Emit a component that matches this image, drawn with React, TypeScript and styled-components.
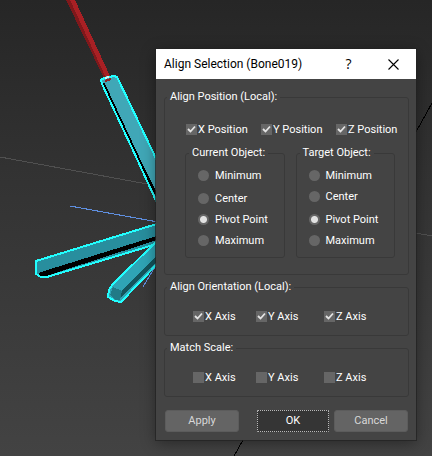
import React, { useState } from "react";
import styled, { createGlobalStyle } from "styled-components";

const GlobalStyle = createGlobalStyle`
  * { box-sizing: border-box; }
  body {
    margin: 0;
    background: #434343;
    font-family: Roboto, "Noto Sans", sans-serif;
    font-size: 11px;
    line-height: 14px;
  }
  button, input { font: inherit; }
`;

const Viewport = styled.main`
  position: relative;
  min-height: 100vh;
  padding: 49px 16px 16px;
  overflow: hidden;
  background: linear-gradient(#262626, #333333 40%, #434343);
`;

const Scene = styled.svg`
  position: absolute;
  top: 0;
  left: 0;
`;

const Dialog = styled.section`
  position: relative;
  width: 65%;
  min-width: 260px;
  max-width: 300px;
  margin-left: auto;
  background: #444444;
  color: #ffffff;
  box-shadow: 0 0 0 1px rgba(35, 35, 35, 0.75), 0 3px 14px rgba(0, 0, 0, 0.4);
`;

const TitleBar = styled.header`
  display: flex;
  align-items: center;
  height: 30px;
  padding-left: 8px;
  background: #ffffff;
  color: #000000;
`;

const Title = styled.h1`
  flex: 1;
  margin: 0;
  font-size: 12px;
  font-weight: 400;
  line-height: 16px;
  white-space: nowrap;
`;

const TitleButton = styled.button`
  display: flex;
  align-items: center;
  justify-content: center;
  width: 45px;
  height: 30px;
  padding: 0;
  border: 0;
  background: transparent;
  color: #000000;
  font-family: "Open Sans", sans-serif;
  font-size: 14px;
`;

const Body = styled.form`
  display: flex;
  flex-direction: column;
  gap: 5px;
  padding: 11px 7px 8px 8px;
`;

const Group = styled.fieldset<{ $inner?: boolean }>`
  min-width: 0;
  margin: 0;
  padding: ${(p) => (p.$inner ? "8px 0 10px 12px" : "0 13px 12px 20px")};
  border: 1px solid #393939;
  border-radius: 3px;
`;

const Legend = styled.legend<{ $inner?: boolean }>`
  margin-left: ${(p) => (p.$inner ? "-9px" : "-18px")};
  padding: 0 3px;
  white-space: nowrap;
`;

const CheckRow = styled.div<{ $columns: string; $indent?: boolean }>`
  display: grid;
  grid-template-columns: ${(p) => p.$columns};
  padding-top: ${(p) => (p.$indent ? "15px" : "18px")};
  padding-left: ${(p) => (p.$indent ? "8px" : "1px")};
`;

const Option = styled.label<{ $gap: number }>`
  display: flex;
  align-items: center;
  gap: ${(p) => p.$gap}px;
  height: 14px;
  white-space: nowrap;
`;

const OptionText = styled.span`
  padding-top: 2px;
`;

const CheckInput = styled.input`
  appearance: none;
  flex: none;
  width: 11px;
  height: 11px;
  margin: 0;
  background: #666666 center / 11px 11px no-repeat;
  &:checked {
    background-image: url("data:image/svg+xml,%3Csvg xmlns='http://www.w3.org/2000/svg' viewBox='0 0 11 11'%3E%3Cpath d='M2 5l2.500 2.500L9 2.500' fill='none' stroke='%23e4e4e4' stroke-width='1.8'/%3E%3C/svg%3E");
  }
`;

const RadioInput = styled.input`
  appearance: none;
  flex: none;
  width: 11px;
  height: 11px;
  margin: 0;
  border-radius: 50%;
  background: #666666;
  &:checked {
    background: radial-gradient(circle, #e2e2e2 3px, #666666 4px);
  }
`;

const ObjectColumns = styled.div`
  display: grid;
  grid-template-columns: 1fr 1fr;
  gap: 11px;
  padding: 10px 0 4px;
`;

const RadioList = styled.div<{ $rows: string }>`
  display: grid;
  grid-template-rows: ${(p) => p.$rows};
`;

const Footer = styled.footer`
  display: flex;
  gap: 5px;
  padding: 8px 1px 0;
`;

const DialogButton = styled.button<{ $focused?: boolean; $pushed?: boolean }>`
  width: ${(p) => (p.$focused ? 72 : 74)}px;
  height: 22px;
  margin-left: ${(p) => (p.$pushed ? "auto" : "0")};
  padding: 0;
  border: 1px ${(p) => (p.$focused ? "dotted #b8b8b8" : "solid #5c5c5c")};
  border-radius: ${(p) => (p.$focused ? 1 : 3)}px;
  background: ${(p) => (p.$focused ? "#353535" : "#646464")};
  color: ${(p) => (p.$focused ? "#ffffff" : "#d8d8d8")};
`;

function Check({ label, on }: { label: string; on?: boolean }) {
  return (
    <Option $gap={1}>
      <CheckInput type="checkbox" defaultChecked={on} />
      <OptionText>{label}</OptionText>
    </Option>
  );
}

const points = ["Minimum", "Center", "Pivot Point", "Maximum"];

function ObjectGroup({ title, rows }: { title: string; rows: string }) {
  const [selected, setSelected] = useState("Pivot Point");
  return (
    <Group $inner>
      <Legend $inner>{title}</Legend>
      <RadioList $rows={rows}>
        {points.map((p) => (
          <Option key={p} $gap={6}>
            <RadioInput type="radio" name={title} checked={selected === p} onChange={() => setSelected(p)} />
            <OptionText>{p}</OptionText>
          </Option>
        ))}
      </RadioList>
    </Group>
  );
}

function BoneScene() {
  return (
    <Scene width="432" height="456" viewBox="0 0 432 456" shapeRendering="crispEdges" aria-hidden="true">
      <path d="M0 157L147 184M416 233L432 236" stroke="#505050" fill="none" />
      <path d="M432 103L416 132M243 440L234 456" stroke="#000" fill="none" />
      <path d="M70 206L158 222M158 262L143 287" stroke="#5f8fe0" fill="none" />
      <path d="M66 0H71L108 77L104 78Z" fill="#7f181b" />
      <path d="M70 0H75L110 76L106 78Z" fill="#a82024" />
      <path d="M101 80L104 78L116 76L118 79L166 180V222L101 84Z" fill="#40a7b7" />
      <path d="M103 83L139 160L162 206" stroke="#000" strokeWidth="3" fill="none" />
      <path d="M162 214L138 161L102 84L101 80L104 78L114 76L117 77L119 81L162 171" stroke="#2ff" strokeWidth="2" fill="none" />
      <path d="M105 78L109 77" stroke="#d8f4f4" strokeWidth="2" />
      <path d="M105 81L108 80L111 79" stroke="#8d2024" strokeWidth="2" fill="none" />
      <path d="M36 261L160 223V243L48 276L42 277L36 274Z" fill="#288e9e" />
      <path d="M38 274L41 272L160 235V239L46 276H41Z" fill="#000" />
      <path d="M160 223L36 261V274L41 277H47L160 243" stroke="#2ff" strokeWidth="2" fill="none" />
      <path d="M160 238L111 286L108 292V297L116 302H121L160 261Z" fill="#2fa4b5" />
      <path d="M122 291L160 252V258L120 299Z" fill="#14545c" />
      <path d="M113 287L122 291L120 300H116L110 295Z" fill="#217a87" />
      <path d="M160 238L112 285L109 290L108 297L115 301L121 302L160 261" stroke="#2ff" strokeWidth="2" fill="none" />
    </Scene>
  );
}

export default function App() {
  return (
    <>
      <GlobalStyle />
      <Viewport>
        <BoneScene />
        <Dialog role="dialog" aria-labelledby="dialog-title">
          <TitleBar>
            <Title id="dialog-title">Align Selection (Bone019)</Title>
            <TitleButton type="button" aria-label="Help">?</TitleButton>
            <TitleButton type="button" aria-label="Close">
              <svg width="11" height="11" viewBox="0 0 11 11" aria-hidden="true">
                <path d="M.5 .5L10.500 10.500M10.500 .5L.5 10.500" stroke="#000" strokeWidth="1.1" />
              </svg>
            </TitleButton>
          </TitleBar>
          <Body onSubmit={(e) => e.preventDefault()}>
            <Group>
              <Legend>Align Position (Local):</Legend>
              <CheckRow $columns="75px 75px 1fr">
                <Check label="X Position" on />
                <Check label="Y Position" on />
                <Check label="Z Position" on />
              </CheckRow>
              <ObjectColumns>
                <ObjectGroup title="Current Object:" rows="23px 21px 21px 14px" />
                <ObjectGroup title="Target Object:" rows="21px 23px 21px 14px" />
              </ObjectColumns>
            </Group>
            <Group>
              <Legend>Align Orientation (Local):</Legend>
              <CheckRow $columns="63px 68px 1fr" $indent>
                <Check label="X Axis" on />
                <Check label="Y Axis" on />
                <Check label="Z Axis" on />
              </CheckRow>
            </Group>
            <Group>
              <Legend>Match Scale:</Legend>
              <CheckRow $columns="63px 68px 1fr" $indent>
                <Check label="X Axis" />
                <Check label="Y Axis" />
                <Check label="Z Axis" />
              </CheckRow>
            </Group>
            <Footer>
              <DialogButton type="button">Apply</DialogButton>
              <DialogButton type="submit" $focused $pushed>OK</DialogButton>
              <DialogButton type="button">Cancel</DialogButton>
            </Footer>
          </Body>
        </Dialog>
      </Viewport>
    </>
  );
}
